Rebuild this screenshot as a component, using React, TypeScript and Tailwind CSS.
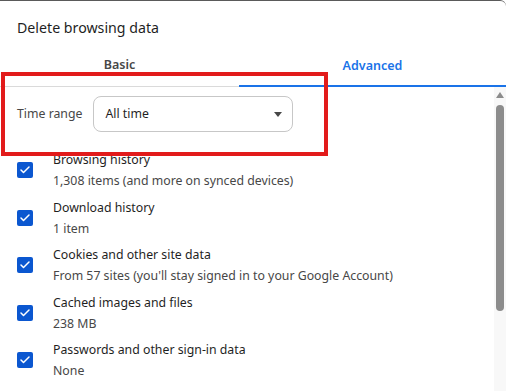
import { Check } from "lucide-react";

const items = [
  { title: "Browsing history", sub: "1,308 items (and more on synced devices)" },
  { title: "Download history", sub: "1 item" },
  { title: "Cookies and other site data", sub: "From 57 sites (you'll stay signed in to your Google Account)" },
  { title: "Cached images and files", sub: "238 MB" },
  { title: "Passwords and other sign-in data", sub: "None" },
];

function Box() {
  return (
    <div className="flex h-4 w-4 shrink-0 items-center justify-center rounded-[2px] bg-[#0b57d0]">
      <Check size={12} strokeWidth={3} className="text-white" />
    </div>
  );
}

export default function App() {
  return (
    <div
      className="relative h-[391px] w-[506px] overflow-hidden rounded-tr-[6px] border-t border-[#5a5a5a] bg-white text-[#1f1f1f]"
      style={{ fontFamily: '"Noto Sans", "Open Sans", sans-serif' }}
    >
      <h1 className="px-[17px] pt-[17px] text-[14.2px] leading-5 font-normal">Delete browsing data</h1>

      <div className="mt-[9px] flex h-[40px] border-b border-[#dadada] text-[12.5px] font-semibold">
        <div className="flex w-[239px] items-center justify-center pb-[2px] text-[#474747]">Basic</div>
        <div className="-mb-[1px] flex flex-1 items-center justify-center border-b-2 border-[#1a73e8] text-[#1a73e8]">
          Advanced
        </div>
      </div>

      <div className="flex h-[306px]">
        <div className="flex-1">
          <div className="flex items-center gap-[11px] px-[17px] pt-[9px]">
            <span className="text-[12.3px] text-[#474747]">Time range</span>
            <div className="flex h-9 w-[200px] items-center justify-between rounded-lg border border-[#c7c7c7] pl-[11px] pr-[10px] text-[12.3px]">
              <span>All time</span>
              <svg width="8" height="5" viewBox="0 0 8 5">
                <path d="M0 0h8L4 5z" fill="#474747" />
              </svg>
            </div>
          </div>

          <div className="mt-[17px] flex flex-col gap-[5.5px] px-[17px]">
            {items.map((it) => (
              <div key={it.title} className="flex items-center gap-5">
                <Box />
                <div className="text-[12.3px]">
                  <div className="leading-[21px]">{it.title}</div>
                  <div className="leading-[21px] whitespace-nowrap text-[#474747]">{it.sub}</div>
                </div>
              </div>
            ))}
          </div>
        </div>

        <div className="flex w-3 flex-col items-center bg-[#f8f8f8] pt-[5px]">
          <svg width="8" height="6" viewBox="0 0 8 6">
            <path d="M0 6h8L4 0z" fill="#8c8c8c" />
          </svg>
          <div className="mt-[7px] h-[206px] w-2 rounded-full bg-[#8c8c8c]" />
        </div>
      </div>

      <div className="absolute left-[1px] top-[71px] h-[84px] w-[327px] border-4 border-[#e21b1b]" />
    </div>
  );
}
